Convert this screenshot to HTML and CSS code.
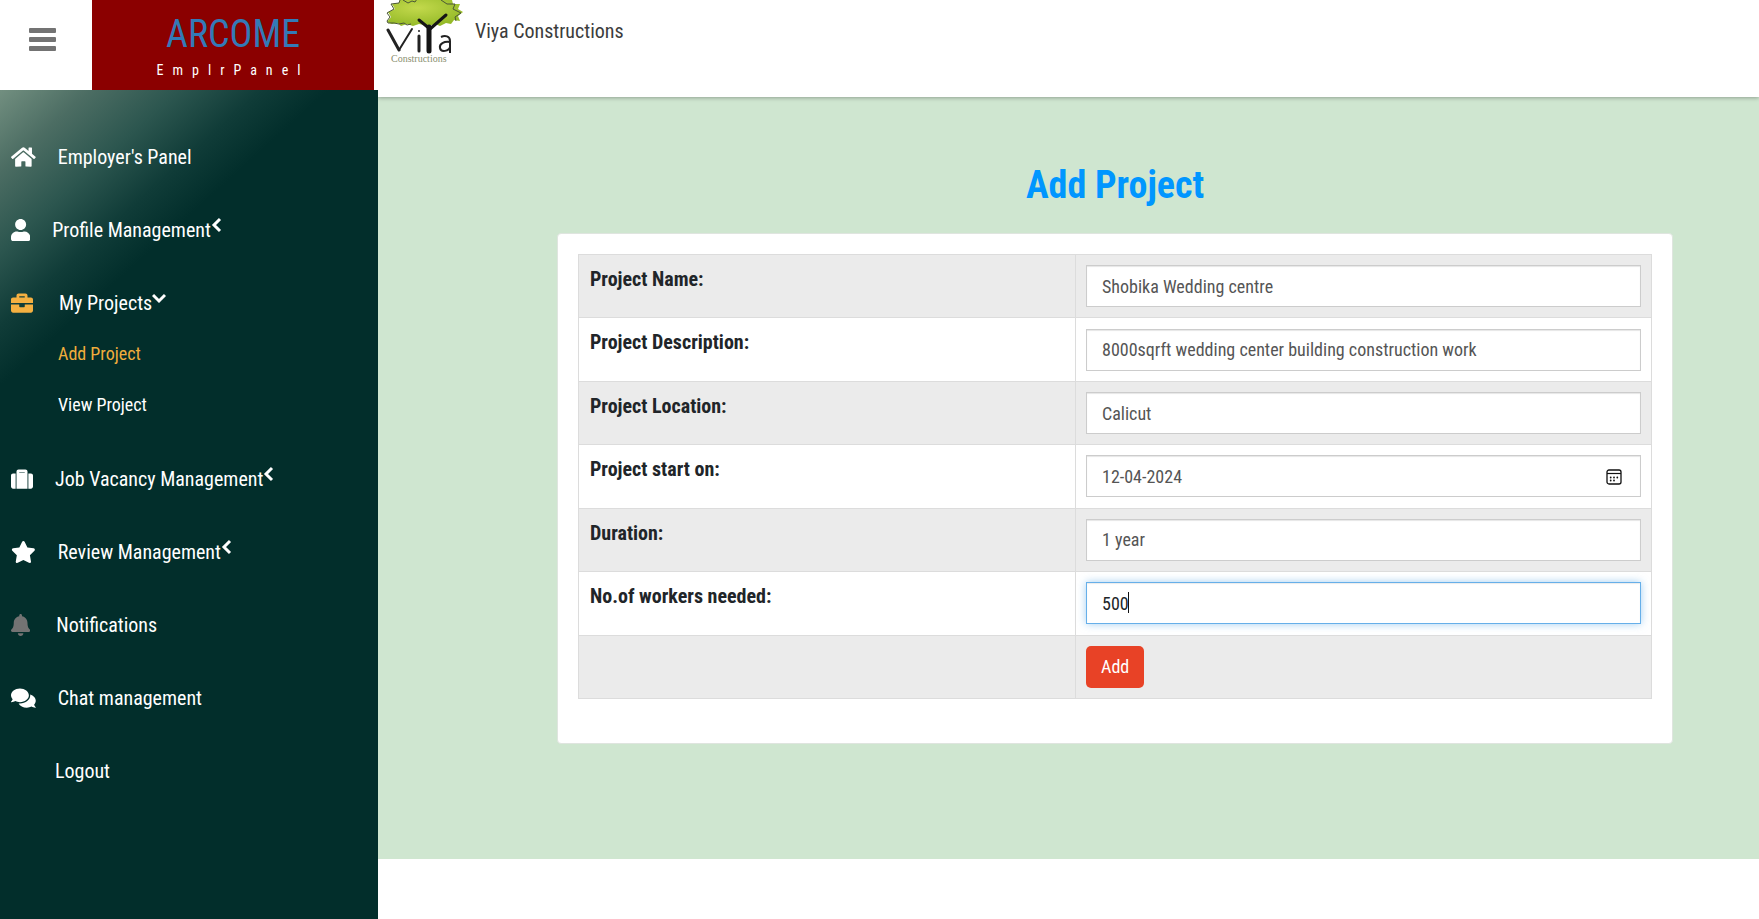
FILE: index.html
```html
<!DOCTYPE html>
<html lang="en">
<head>
<meta charset="utf-8">
<title>Add Project</title>
<link rel="stylesheet" href="styles.css">
</head>
<body>
<div class="page">
  <aside class="side">
    <div class="side-head">
      <button class="menu-btn" type="button" aria-label="Toggle menu">
        <svg width="28" height="24" viewBox="0 0 28 24"><rect x="1" y="0" width="27" height="5" rx="1"/><rect x="1" y="9" width="27" height="5" rx="1"/><rect x="1" y="18" width="27" height="5" rx="1"/></svg>
      </button>
      <div class="brand">
        <a class="brand-name" href="#">ARCOME</a>
        <span class="brand-sub">EmplrPanel</span>
      </div>
    </div>
    <nav class="nav">
      <a class="nav-item" href="#"><svg class="icon" viewBox="0 0 576 512"><path d="M280.37 148.26L96 300.11V464a16 16 0 0 0 16 16l112.06-.29a16 16 0 0 0 15.92-16V368a16 16 0 0 1 16-16h64a16 16 0 0 1 16 16v95.64a16 16 0 0 0 16 16.05L464 480a16 16 0 0 0 16-16V300L295.67 148.26a12.19 12.19 0 0 0-15.3 0zM571.6 251.47L488 182.56V44.05a12 12 0 0 0-12-12h-56a12 12 0 0 0-12 12v72.61L318.47 43a48 48 0 0 0-61 0L4.34 251.47a12 12 0 0 0-1.6 16.9l25.5 31A12 12 0 0 0 45.15 301l235.22-193.74a12.19 12.19 0 0 1 15.3 0L530.9 301a12 12 0 0 0 16.9-1.6l25.5-31a12 12 0 0 0-1.7-16.93z"/></svg><span>Employer's Panel</span></a>
      <a class="nav-item" href="#"><svg class="icon" viewBox="0 0 448 512"><path d="M224 256c70.7 0 128-57.3 128-128S294.7 0 224 0 96 57.3 96 128s57.3 128 128 128zm89.6 32h-16.7c-22.2 10.2-46.9 16-72.9 16s-50.6-5.8-72.9-16h-16.7C60.2 288 0 348.2 0 422.4V464c0 26.5 21.5 48 48 48h352c26.5 0 48-21.5 48-48v-41.6c0-74.2-60.2-134.4-134.4-134.4z"/></svg><span>Profile Management</span><svg class="chev" width="11" height="16" viewBox="0 0 11 16"><path d="M9 2L3 8l6 6"/></svg></a>
      <a class="nav-item spaced" href="#"><svg class="icon amber" viewBox="0 0 512 512"><path d="M320 336c0 8.84-7.16 16-16 16h-96c-8.84 0-16-7.16-16-16v-48H0v144c0 25.6 22.4 48 48 48h416c25.6 0 48-22.4 48-48V288H320v48zm144-208h-80V80c0-25.6-22.4-48-48-48H176c-25.6 0-48 22.4-48 48v48H48c-25.6 0-48 22.4-48 48v80h512v-80c0-25.6-22.4-48-48-48zm-144 0H192V96h128v32z"/></svg><span>My Projects</span><svg class="chev" width="14" height="14" viewBox="0 0 14 14"><path d="M1 4l6 6 6-6"/></svg></a>
      <div class="subnav">
        <a class="sub-item amber" href="#">Add Project</a>
        <a class="sub-item" href="#">View Project</a>
      </div>
      <a class="nav-item" href="#"><svg class="icon" viewBox="0 0 512 512"><path d="M128 480h256V80c0-26.5-21.5-48-48-48H176c-26.5 0-48 21.5-48 48v400zm64-384h128v16H192V96zm320 80v256c0 26.5-21.5 48-48 48h-60V128h60c26.5 0 48 21.5 48 48zM108 480H48c-26.5 0-48-21.5-48-48V176c0-26.5 21.5-48 48-48h60v352z"/></svg><span>Job Vacancy Management</span><svg class="chev" width="11" height="16" viewBox="0 0 11 16"><path d="M9 2L3 8l6 6"/></svg></a>
      <a class="nav-item" href="#"><svg class="icon" viewBox="0 0 576 512"><path d="M259.3 17.8L194 150.2 47.9 171.5c-26.2 3.8-36.7 36.1-17.7 54.6l105.7 103-25 145.5c-4.5 26.3 23.2 46 46.4 33.7L288 439.6l130.7 68.7c23.2 12.2 50.9-7.4 46.4-33.7l-25-145.5 105.7-103c19-18.5 8.5-50.8-17.7-54.6L382 150.2 316.7 17.8c-11.7-23.6-45.6-23.9-57.4 0z"/></svg><span>Review Management</span><svg class="chev" width="11" height="16" viewBox="0 0 11 16"><path d="M9 2L3 8l6 6"/></svg></a>
      <a class="nav-item spaced" href="#"><svg class="icon grey" viewBox="0 0 448 512"><path d="M224 512c35.32 0 63.97-28.65 63.97-64H160.03c0 35.35 28.65 64 63.97 64zm215.39-149.71c-19.32-20.76-55.47-51.99-55.47-154.29 0-77.7-54.48-139.9-127.94-155.16V32c0-17.67-14.32-32-31.98-32s-31.98 14.33-31.98 32v20.84C118.56 68.1 64.08 130.3 64.08 208c0 102.3-36.15 133.53-55.47 154.29-6 6.45-8.66 14.16-8.61 21.71.11 16.4 12.98 32 32.1 32h383.8c19.12 0 32-15.6 32.1-32 .05-7.55-2.61-15.27-8.61-21.71z"/></svg><span>Notifications</span></a>
      <a class="nav-item" href="#"><svg class="icon" viewBox="0 0 576 512"><path d="M416 192c0-88.4-93.1-160-208-160S0 103.6 0 192c0 34.3 14.1 65.9 38 92-13.4 30.2-35.5 54.2-35.8 54.5-2.2 2.3-2.8 5.7-1.5 8.7S4.8 352 8 352c36.6 0 66.9-12.3 88.7-25 32.2 15.7 70.3 25 111.3 25 114.9 0 208-71.6 208-160zm122 220c23.9-26 38-57.7 38-92 0-66.9-53.5-124.2-129.3-148.1.9 6.6 1.3 13.3 1.3 20.1 0 105.9-107.7 192-240 192-10.8 0-21.3-.8-31.7-1.9C207.8 439.6 281.8 480 368 480c41 0 79.1-9.2 111.3-25 21.8 12.7 52.1 25 88.7 25 3.2 0 6.1-1.9 7.3-4.8 1.3-2.9.7-6.3-1.5-8.7-.3-.2-22.4-24.2-35.8-54.5z"/></svg><span>Chat management</span></a>
      <a class="nav-item no-icon" href="#"><span>Logout</span></a>
    </nav>
  </aside>
  <div class="main">
    <header class="topbar">
      <svg class="logo" width="80" height="66" viewBox="0 0 80 66">
        <defs><radialGradient id="leaf" cx=".4" cy=".3" r=".7"><stop offset="0" stop-color="#c3d94c"/><stop offset="1" stop-color="#95ba28"/></radialGradient></defs>
        <path d="M14 0l-1 3-7 1 3 5-7 3 3 5-4 5 5 2 6-1 3 3 6-2 6 2 6-2 10 2 6-2 5 2 6-3 5 1 3-4 6 1-2-5 5-4-5-3 2-5-7 0-1-4z" fill="url(#leaf)"/>
        <path d="M25 24l-4 1-3-2-5 1-5-1-6 0-1-2 3-4-3-4 7-4-3-5 8-1 1-3M17 0l5 3 4-2 3 1 2-3M55 0l6 4 8 0-2 5 8 4-6 4 1 4" fill="none" stroke="#4b5735" stroke-width="1"/>
        <path d="M44 29l16-14M33 20l11 9" fill="none" stroke="#151515" stroke-width="3" stroke-linecap="round"/>
        <path d="M43 27v24" fill="none" stroke="#151515" stroke-width="5" stroke-linecap="round"/>
        <path d="M2 30l11 20M33 36v15" fill="none" stroke="#222" stroke-width="3" stroke-linecap="round"/>
        <path d="M13 50L26 29" fill="none" stroke="#222" stroke-width="2" stroke-linecap="round"/>
        <circle cx="33" cy="31" r="1" fill="#222"/>
        <path d="M55 37c4-2 9-1 9 4v12M64 42c-6-1-11 2-10 6 1 5 9 3 10-1" fill="none" stroke="#222" stroke-width="2"/>
        <text class="logo-sub" x="5" y="62">Constructions</text>
      </svg>
      <span class="company">Viya Constructions</span>
    </header>
    <main class="content">
      <h1 class="title">Add Project</h1>
      <form class="card">
        <table class="form-table">
          <tr><th scope="row"><label for="name">Project Name:</label></th><td><input class="field" id="name" type="text" value="Shobika Wedding centre"></td></tr>
          <tr><th scope="row"><label for="desc">Project Description:</label></th><td><input class="field" id="desc" type="text" value="8000sqrft wedding center building construction work"></td></tr>
          <tr><th scope="row"><label for="loc">Project Location:</label></th><td><input class="field" id="loc" type="text" value="Calicut"></td></tr>
          <tr><th scope="row"><label for="start">Project start on:</label></th><td><div class="date"><input class="field" id="start" type="text" value="12-04-2024"><button class="cal" type="button" aria-label="Pick a date"><svg width="16" height="16" viewBox="0 0 16 16"><rect x="1" y="1" width="14" height="14" rx="2" fill="none" stroke="#111" stroke-width="1.3"/><path d="M1 4.5h14" stroke="#111" stroke-width="1.2"/><g fill="#111"><circle cx="4.7" cy="8.5" r=".9"/><circle cx="8" cy="8.5" r=".9"/><circle cx="11.3" cy="8.5" r=".9"/><circle cx="4.7" cy="11.5" r=".9"/><circle cx="8" cy="11.5" r=".9"/></g></svg></button></div></td></tr>
          <tr><th scope="row"><label for="dur">Duration:</label></th><td><input class="field" id="dur" type="text" value="1 year"></td></tr>
          <tr><th scope="row"><label for="workers">No.of workers needed:</label></th><td><input class="field active" id="workers" type="text" value="500"></td></tr>
          <tr><th></th><td><button class="add" type="submit">Add</button></td></tr>
        </table>
      </form>
    </main>
  </div>
</div>
</body>
</html>
```
FILE: styles.css
```css
* { box-sizing: border-box; }
body, button, input { font-family: "Roboto Condensed", "Liberation Sans Narrow", Roboto, sans-serif; }
body { margin: 0; background: #fff; color: #212529; font-size: 20px; line-height: 24px; }
a { text-decoration: none; }
.page { display: flex; min-height: 100vh; }
.side { position: relative; z-index: 1; width: 378px; flex: none; display: flex; flex-direction: column; background: #fff; }
.side-head { display: flex; height: 90px; padding-right: 4px; }
.menu-btn { width: 92px; border: 0; padding: 0 8px 8px 0; background: none; fill: #737373; }
.brand { flex: 1; display: flex; flex-direction: column; align-items: center; background: #8b0000; padding-top: 12px; }
.brand-name { color: #337ab7; font-size: 38px; line-height: 44px; }
.brand-sub { color: #fff; font-size: 14px; line-height: 28px; letter-spacing: 9px; }
.nav { flex: 1; padding: 30px 0 0 11px; background: linear-gradient(138deg, #728f80 0, #4c6d63 60px, #2c564f 120px, #103c38 175px, #022e2b 220px); }
.nav-item { display: flex; align-items: center; height: 73px; color: #fff; }
.icon { height: 22px; margin-right: 22px; fill: #fff; }
.spaced .icon { margin-right: 26px; }
.no-icon { padding-left: 44px; }
.chev { fill: none; stroke: #fff; stroke-width: 3px; margin-bottom: 10px; }
.amber { color: #f0ad3c; fill: #f5b041; }
.grey { fill: #737373; }
.subnav { display: flex; flex-direction: column; padding: 0 0 12px 47px; margin-top: -11px; }
.sub-item { font-size: 18px; line-height: 51px; color: #fff; }
.sub-item.amber { color: #f0ad3c; }
.main { flex: 1; min-width: 0; }
.topbar { position: relative; display: flex; height: 97px; box-shadow: 0 1px 4px rgba(0,0,0,.3); padding-left: 8px; }
.logo-sub { font: 10px "Liberation Serif", serif; fill: #8a8f70; }
.company { color: #3c3c3c; padding: 19px 0 0 9px; }
.content { background: #cfe6d0; padding: 64px 86px 115px 179px; }
.title { margin: 0; padding-bottom: 24px; text-align: center; color: #0096ff; font-size: 38px; line-height: 48px; }
.card { background: #fff; border: 1px solid #dfe5df; border-radius: 4px; padding: 20px 20px 44px; }
.form-table { width: 100%; height: 445px; border-collapse: collapse; }
.form-table th, .form-table td { border: 1px solid #dcdcdc; padding: 10px; }
.form-table th { width: 497px; text-align: left; vertical-align: top; padding: 12px 11px; }
.form-table tr:nth-child(odd) { background: #ebebeb; }
.field { display: block; width: 100%; height: 42px; padding: 0 15px; border: 1px solid #ccc; background: #fff; color: #555; font-size: 18px; box-shadow: inset 0 1px 1px rgba(0,0,0,.1); }
.active { color: #212529; border-color: #66afe9; box-shadow: inset 0 1px 1px rgba(0,0,0,.08), 0 0 8px rgba(102,175,233,.6); background: linear-gradient(#111, #111) 41px 9px / 1px 21px no-repeat #fff; }
.date { position: relative; }
.cal { position: absolute; right: 19px; top: 13px; padding: 0; border: 0; background: none; width: 16px; height: 18px; display: flex; align-items: center; }
.add { display: block; height: 42px; padding: 0 15px; border: 0; border-radius: 5px; background: #e84226; color: #fff; font-size: 18px; }
```
